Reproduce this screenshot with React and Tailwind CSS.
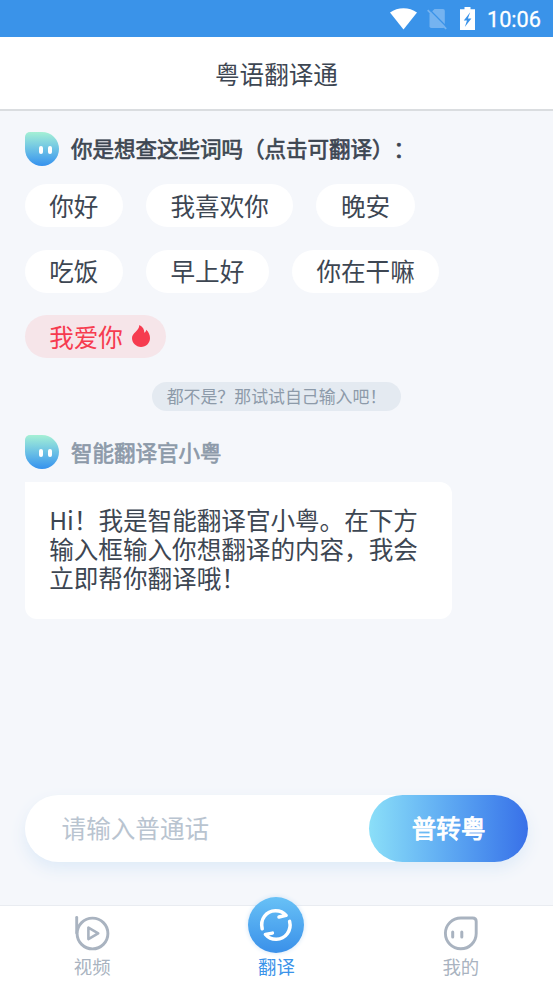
const chipRows = [
  [{ text: '你好' }, { text: '我喜欢你' }, { text: '晚安' }],
  [{ text: '吃饭' }, { text: '早上好' }, { text: '你在干嘛' }],
  [{ text: '我爱你', hot: true }],
];

function StatusBar() {
  return (
    <div className="h-[37px] shrink-0 bg-[#3a93e9] flex items-center justify-end pr-[12px] text-white">
      <svg width="27" height="22" viewBox="0 0 27 22" className="mr-[10px]">
        <path d="M0 4.6C7.6-1.1 19.4-1.1 27 4.6L13.5 21.6Z" fill="#fff" />
      </svg>
      <svg width="20" height="22" viewBox="0 0 20 22" className="mr-[13px]">
        <path d="M7.5 1H16Q17.8 1 17.8 2.8V18.2Q17.8 20 16 20H4.3Q2.5 20 2.5 18.2V6Z" fill="#75b3f0" />
        <path d="M2.2 1.2L20.6 19.8" stroke="#3a93e9" strokeWidth="1.4" />
        <path d="M.7 2.2L19.2 20.8" stroke="#75b3f0" strokeWidth="1.8" />
      </svg>
      <svg width="15" height="23" viewBox="0 0 15 23" className="mr-[12px]">
        <path d="M4.5 0H10.5V2.3H15V23H0V2.3H4.5Z" fill="#fff" />
        <path d="M10.2 5.3L3.8 13.5H7L4.8 20L11.4 11.6H7.9Z" fill="#3a93e9" />
      </svg>
      <span className="font-['Roboto',sans-serif] text-[21.7px] leading-none pt-[2px] [-webkit-text-stroke:0.3px]">10:06</span>
    </div>
  )
}

function Avatar() {
  return (
    <div className="w-[34px] h-[34px] shrink-0 rounded-[17px] rounded-tl-[5px] bg-linear-to-b from-[#a5f0d4] to-[#3591ee] flex justify-end items-center gap-[5px] pr-[7px] pt-[2px]">
      <span className="w-[4px] h-[8px] rounded-full bg-white" />
      <span className="w-[4px] h-[8px] rounded-full bg-white" />
    </div>
  )
}

function Flame() {
  return (
    <svg width="18" height="22" viewBox="0 0 18 22" className="ml-[9px] -mt-[2px]">
      <path d="M7.4 0C10.8 1.6 12.4 4.6 12.3 7.8C13.5 7.2 14.1 6.1 14.2 4.8C16.8 7.2 18 10 18 13C18 18.2 14.1 21.9 9 21.9S0 18.2 0 13.1C0 7.8 6.9 6.2 7.4 0Z" fill="#f63b4f" />
    </svg>
  )
}

function Chip({ text, hot }) {
  return (
    <div className={`h-[43px] rounded-full px-[24.6px] flex items-center text-[24.58px] leading-none whitespace-nowrap ${hot ? 'bg-[#f6e5e9] text-[#f63b4f] pr-[16px]' : 'bg-white'}`}>
      <span className="pb-px">{text}</span>
      {hot && <Flame />}
    </div>
  )
}

function VideoIcon() {
  return (
    <svg width="36" height="36" viewBox="0 0 36 36" fill="none" stroke="#a9b3c0" strokeWidth="2.9" strokeLinecap="round" strokeLinejoin="round">
      <path d="M2.7 2.5V18" />
      <circle cx="18.5" cy="18.5" r="15.4" />
      <path d="M14.4 12.7V24.1L24.2 18.4Z" strokeWidth="2.6" />
    </svg>
  )
}

function MineIcon() {
  return (
    <svg width="36" height="36" viewBox="0 0 36 36" fill="none" stroke="#a9b3c0" strokeWidth="2.9" strokeLinecap="round">
      <path d="M17.8 3H29.6Q33.2 3 33.2 6.6V18.5A15.4 15.4 0 1 1 17.8 3Z" />
      <path d="M9.7 17V22M18.8 17V22" strokeWidth="3" />
    </svg>
  )
}

function SwapIcon() {
  return (
    <svg width="56" height="56" viewBox="0 0 56 56" fill="none" stroke="#fff" strokeWidth="3.5" strokeLinecap="round" strokeLinejoin="round">
      <path d="M14.2 31.8C11.8 22.3 18.3 14 27.3 13.8C31.8 13.7 35.4 15.3 38.1 18.4L31 20" />
      <path d="M41.6 24.4C43.9 33.6 37.4 42.1 28.4 42.3C24 42.4 20.3 40.8 17.4 37.4L24.4 36.1" />
    </svg>
  )
}

export default function App() {
  return (
    <div className="w-[553px] h-[983px] overflow-hidden bg-[#f5f7fb] text-[#3d4652] font-['Noto_Sans_CJK_SC',sans-serif] [text-spacing-trim:space-all] flex flex-col">
      <StatusBar />
      <header className="h-[74px] shrink-0 bg-white border-b-2 border-[#dadde0] flex items-center justify-center text-[24.58px] leading-none">
        粤语翻译通
      </header>

      <main className="flex-1 px-[24.6px] pt-[21px] flex flex-col">
        <div className="flex items-center gap-[12.3px]">
          <Avatar />
          <h2 className="text-[21.5px] leading-none pb-[2px] [-webkit-text-stroke:0.7px]">你是想查这些词吗（点击可翻译）：</h2>
        </div>

        <div className="mt-[18px] flex flex-col gap-[22.7px]">
          {chipRows.map((row, i) => (
            <div key={i} className="flex gap-[23px]">
              {row.map(chip => <Chip key={chip.text} {...chip} />)}
            </div>
          ))}
        </div>

        <div className="mt-[24px] h-[29px] px-[15px] self-center rounded-full bg-[#e4eaf1] text-[#8d9aa9] text-[16.9px] leading-none flex items-center">
          都不是？那试试自己输入吧！
        </div>

        <div className="mt-[24px] flex items-center gap-[12.3px]">
          <Avatar />
          <h2 className="text-[21.5px] leading-none pb-[2px] text-[#8d9aa9] [-webkit-text-stroke:0.7px]">智能翻译官小粤</h2>
        </div>
        <div className="mt-[12.5px] w-[427px] h-[137.5px] rounded-[12px] rounded-tl-none bg-white pl-[24.6px] pt-[23px] text-[24.58px] leading-[29px] whitespace-nowrap">
          Hi！我是智能翻译官小粤。在下方<br />
          输入框输入你想翻译的内容，我会<br />
          立即帮你翻译哦！
        </div>

        <div className="mt-auto mb-[43.5px] h-[67px] rounded-full bg-white flex items-center justify-between pl-[37px] shadow-[0_7px_16px_#dfebf8]">
          <span className="text-[24.58px] leading-none pb-[1px] text-[#b9c4d0]">请输入普通话</span>
          <button className="w-[159.5px] h-[67px] pb-[2px] rounded-full bg-linear-to-r from-[#8bdff8] to-[#3970e8] text-white text-[24.58px] leading-none [-webkit-text-stroke:0.9px]">
            普转粤
          </button>
        </div>
      </main>

      <nav className="h-[78px] shrink-0 bg-white border-t border-[#e9ecf1] grid grid-cols-3 text-[18.4px] leading-none text-[#a9b3c0]">
        <div className="flex flex-col items-center pt-[9px]">
          <VideoIcon />
          <span className="mt-[6px]">视频</span>
        </div>
        <div className="flex flex-col items-center text-[#3a93e9]">
          <div className="-mt-[9px] w-[56px] h-[56px] rounded-full bg-linear-to-b from-[#68c1f6] to-[#3a90e9] shadow-[0_0_5px_#cfe3f6]">
            <SwapIcon />
          </div>
          <span className="mt-[4px]">翻译</span>
        </div>
        <div className="flex flex-col items-center pt-[9px]">
          <MineIcon />
          <span className="mt-[6px]">我的</span>
        </div>
      </nav>
    </div>
  )
}
